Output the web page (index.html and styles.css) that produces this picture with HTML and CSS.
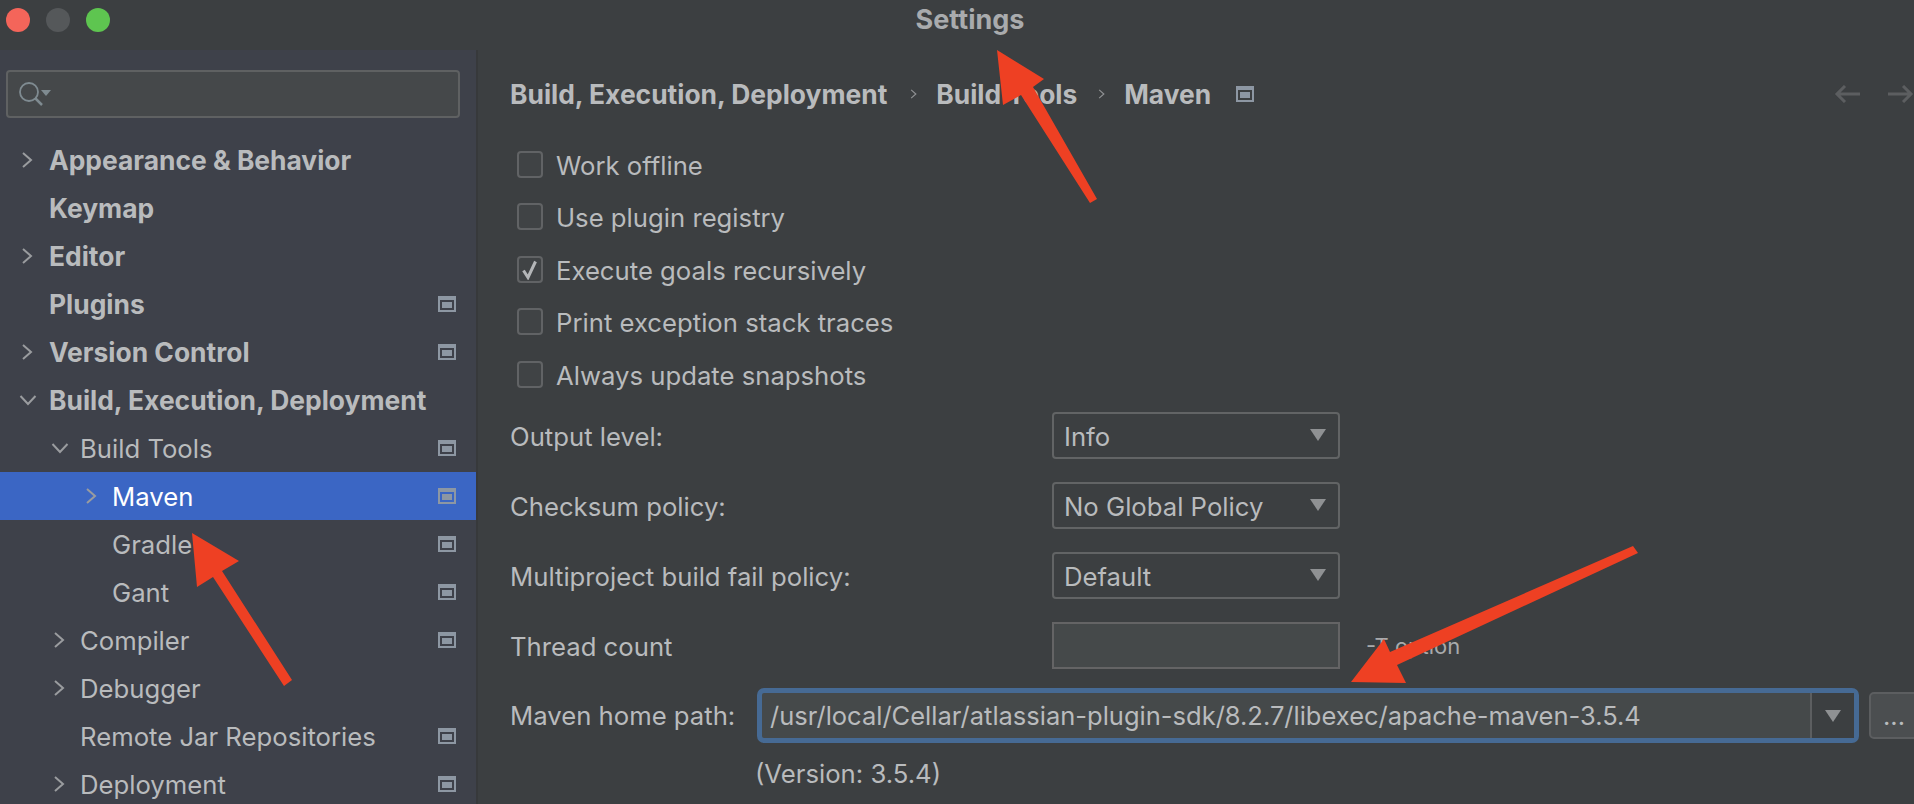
FILE: index.html
```html
<!DOCTYPE html>
<html lang="en">
<head>
<meta charset="utf-8">
<title>Settings</title>
<link rel="stylesheet" href="styles.css">
</head>
<body>
<svg class="defs" width="0" height="0" aria-hidden="true">
  <symbol id="right" viewBox="0 0 12 18"><path d="M2 2l8 7-8 7" fill="none" stroke="currentColor" stroke-width="2"/></symbol>
  <symbol id="down" viewBox="0 0 18 12"><path d="M1.500 2l7.500 8 7.500-8" fill="none" stroke="currentColor" stroke-width="2"/></symbol>
  <symbol id="proj" viewBox="0 0 18 16"><path fill-rule="evenodd" d="M0 0h18v16H0zM2 4v10h14V4z" fill="#8d97a3"/><rect x="4" y="6" width="10" height="6" fill="#8d97a3"/></symbol>
  <symbol id="caret" viewBox="0 0 16 12"><path d="M0 0h16L8 12z" fill="#8f9193"/></symbol>
</svg>
<div class="window">
  <header class="titlebar">
    <div class="lights"><span class="light red"></span><span class="light grey"></span><span class="light green"></span></div>
    <div class="title">Settings</div>
  </header>
  <div class="body">
    <aside class="sidebar">
      <div class="search">
        <svg class="search-icon" width="34" height="26" viewBox="0 0 34 26"><circle cx="11" cy="11" r="9" fill="none" stroke="#7f8b91" stroke-width="1.800"/><path d="M17 17l7 7" stroke="#7f8b91" stroke-width="2.500"/><path d="M23 9h10l-5 6z" fill="#7f8b91"/></svg>
      </div>
      <ul class="tree">
        <li class="row l1 bold"><svg class="chev"><use href="#right"/></svg><span class="name">Appearance &amp; Behavior</span></li>
        <li class="row l1 bold"><span class="name">Keymap</span></li>
        <li class="row l1 bold"><svg class="chev"><use href="#right"/></svg><span class="name">Editor</span></li>
        <li class="row l1 bold"><span class="name">Plugins</span><svg class="proj"><use href="#proj"/></svg></li>
        <li class="row l1 bold"><svg class="chev"><use href="#right"/></svg><span class="name">Version Control</span><svg class="proj"><use href="#proj"/></svg></li>
        <li class="row l1 bold"><svg class="chev open"><use href="#down"/></svg><span class="name">Build, Execution, Deployment</span></li>
        <li class="row l2"><svg class="chev open"><use href="#down"/></svg><span class="name">Build Tools</span><svg class="proj"><use href="#proj"/></svg></li>
        <li class="row l3 selected"><svg class="chev"><use href="#right"/></svg><span class="name">Maven</span><svg class="proj"><use href="#proj"/></svg></li>
        <li class="row l3"><span class="name">Gradle</span><svg class="proj"><use href="#proj"/></svg></li>
        <li class="row l3"><span class="name">Gant</span><svg class="proj"><use href="#proj"/></svg></li>
        <li class="row l2"><svg class="chev"><use href="#right"/></svg><span class="name">Compiler</span><svg class="proj"><use href="#proj"/></svg></li>
        <li class="row l2"><svg class="chev"><use href="#right"/></svg><span class="name">Debugger</span></li>
        <li class="row l2"><span class="name">Remote Jar Repositories</span><svg class="proj"><use href="#proj"/></svg></li>
        <li class="row l2"><svg class="chev"><use href="#right"/></svg><span class="name">Deployment</span><svg class="proj"><use href="#proj"/></svg></li>
      </ul>
    </aside>
    <main class="main">
      <nav class="crumbs">
        <span>Build, Execution, Deployment</span>
        <svg class="crumb-sep"><use href="#right"/></svg>
        <span>Build Tools</span>
        <svg class="crumb-sep second"><use href="#right"/></svg>
        <span>Maven</span>
        <svg class="proj crumb-proj"><use href="#proj"/></svg>
        <div class="nav-arrows">
          <svg width="26" height="18" viewBox="0 0 26 18"><path d="M26 9H3M11 1L3 9l8 8" fill="none" stroke="#5c5e60" stroke-width="3"/></svg>
          <svg width="26" height="18" viewBox="0 0 26 18"><path d="M0 9h23M15 1l8 8-8 8" fill="none" stroke="#5c5e60" stroke-width="3"/></svg>
        </div>
      </nav>
      <div class="check-row"><span class="box"></span><span class="check-text">Work offline</span></div>
      <div class="check-row"><span class="box"></span><span class="check-text">Use plugin registry</span></div>
      <div class="check-row"><span class="box"><svg width="20" height="21" viewBox="0 0 20 21"><path d="M3.500 11.500L8 18.500 15.500 2.500" fill="none" stroke="#b4b6b8" stroke-width="3"/></svg></span><span class="check-text">Execute goals recursively</span></div>
      <div class="check-row"><span class="box"></span><span class="check-text">Print exception stack traces</span></div>
      <div class="check-row"><span class="box"></span><span class="check-text">Always update snapshots</span></div>
      <div class="form-row"><span class="label">Output level:</span><div class="select">Info<svg class="caret"><use href="#caret"/></svg></div></div>
      <div class="form-row"><span class="label">Checksum policy:</span><div class="select">No Global Policy<svg class="caret"><use href="#caret"/></svg></div></div>
      <div class="form-row"><span class="label">Multiproject build fail policy:</span><div class="select">Default<svg class="caret"><use href="#caret"/></svg></div></div>
      <div class="form-row"><span class="label">Thread count</span><div class="input"></div><span class="hint">-T option</span></div>
      <div class="path-row">
        <span class="path-label">Maven home path:</span>
        <div class="combo">
          <div class="combo-text">/usr/local/Cellar/atlassian-plugin-sdk/8.2.7/libexec/apache-maven-3.5.4</div>
          <div class="combo-btn"><svg class="caret"><use href="#caret"/></svg></div>
        </div>
        <div class="browse">...</div>
      </div>
      <div class="version">(Version: 3.5.4)</div>
    </main>
  </div>
</div>
<svg class="arrows" width="1914" height="804" viewBox="0 0 1914 804" aria-hidden="true">
  <path d="M997 50L1044 79 1033 87 1097 199 1090 203 1021 95 1003 105z"/>
  <path d="M192 533L239 561 222 571 292 680 284 686 213 577 197 587z"/>
  <path d="M1351 682L1384 639 1390 652 1633 546 1638 553 1397 665 1406 683z"/>
</svg>
</body>
</html>
```

FILE: styles.css
```css
* { box-sizing: border-box; }
html, body { margin: 0; height: 100%; overflow: hidden; }
body { position: relative; background: #3c3f41; color: #b9bbbd; font-family: Inter, "Liberation Sans", sans-serif; font-size: 25.700px; }
.defs { position: absolute; }
.window { display: flex; flex-direction: column; height: 804px; overflow: hidden; }

.titlebar { flex: 0 0 50px; position: relative; display: flex; align-items: center; justify-content: center; background: #3c3f41; padding-left: 26px; }
.lights { position: absolute; left: 6px; top: 8px; display: flex; gap: 16px; }
.light { width: 24px; height: 24px; border-radius: 50%; }
.red { background: #f4655a; }
.grey { background: #55585a; }
.green { background: #5ec550; }
.title { font-weight: 700; font-size: 27px; color: #a9abad; margin-bottom: 12px; }

.body { flex: 1; display: flex; min-height: 0; }
.sidebar { flex: 0 0 478px; background: #3e414a; border-right: 2px solid #37393b; overflow: hidden; }
.search { height: 48px; margin: 20px 16px 0 6px; background: #45484a; border: 2px solid #5f6162; border-radius: 4px; display: flex; align-items: center; padding-left: 10px; }
.search-icon { display: block; }
.tree { list-style: none; margin: 18px 0 0; padding: 0; }
.row { height: 48px; display: flex; align-items: center; position: relative; white-space: nowrap; }
.row.bold { font-weight: 700; font-size: 26.400px; }
.row.l1 { padding-left: 49px; }
.row.l2 { padding-left: 80px; }
.row.l3 { padding-left: 112px; }
.chev { position: absolute; width: 12px; height: 18px; color: #9a9c9f; top: 15px; }
.chev.open { width: 18px; height: 12px; top: 18px; }
.l1 .chev { left: 21px; }
.l2 .chev { left: 53px; }
.l3 .chev { left: 85px; }
.chev.open { margin-left: -2px; }
.proj { width: 18px; height: 16px; margin-left: auto; margin-right: 20px; flex: none; }
.selected { background: #3b66c4; color: #fff; }

.main { flex: 1; padding-left: 32px; min-width: 0; overflow: hidden; }
.crumbs { height: 88px; display: flex; align-items: center; font-weight: 700; font-size: 26.400px; }
.crumb-sep { width: 7px; height: 14px; margin: 0 19px 0 23px; color: #909294; }
.crumb-sep.second { margin-left: 21px; }
.crumb-proj { margin: 0 0 0 25px; }
.nav-arrows { margin-left: auto; display: flex; gap: 28px; }
.nav-arrows svg { display: block; }

.check-row { height: 52.500px; display: flex; align-items: center; gap: 13px; padding-left: 7px; }
.check-text { position: relative; top: 1px; }
.box { width: 26px; height: 27px; border: 2px solid #616365; border-radius: 4px; background: #404345; display: flex; align-items: center; justify-content: center; }
.box svg { display: block; flex: none; }

.form-row { height: 70px; display: flex; align-items: center; }
.label { flex: 0 0 542px; padding-top: 2px; }
.select { width: 288px; height: 47px; border: 2px solid #626465; border-radius: 4px; padding: 2px 0 0 10px; display: flex; align-items: center; position: relative; background: #3c3f41; }
.caret { width: 18px; height: 12px; flex: none; }
.select .caret { position: absolute; right: 11px; top: 15px; }
.input { width: 288px; height: 47px; border: 2px solid #646465; background: #45494a; }
.hint { font-size: 22px; margin-left: 26px; color: #a8aaac; }

.path-row { height: 70px; display: flex; align-items: center; font-size: 25.500px; }
.path-label { flex: 0 0 247px; font-size: 25.700px; }
.combo { flex: 0 0 1102px; height: 55px; border: 5px solid #466a94; border-radius: 7px; display: flex; background: #45494a; }
.combo-text { flex: 1; display: flex; align-items: center; padding-left: 8px; white-space: nowrap; }
.combo-btn { flex: 0 0 44px; background: #3c3f41; border-left: 2px solid #5c5e60; display: flex; align-items: center; justify-content: center; }
.browse { flex: 0 0 50px; height: 47px; margin-left: 10px; background: #4b4e50; border: 2px solid #5c5e60; border-radius: 5px; display: flex; align-items: center; justify-content: center; }
.version { margin-left: 245px; margin-top: 3px; line-height: 40px; }

.arrows { position: absolute; left: 0; top: 0; pointer-events: none; }
.arrows path { fill: #ee4023; }
```
